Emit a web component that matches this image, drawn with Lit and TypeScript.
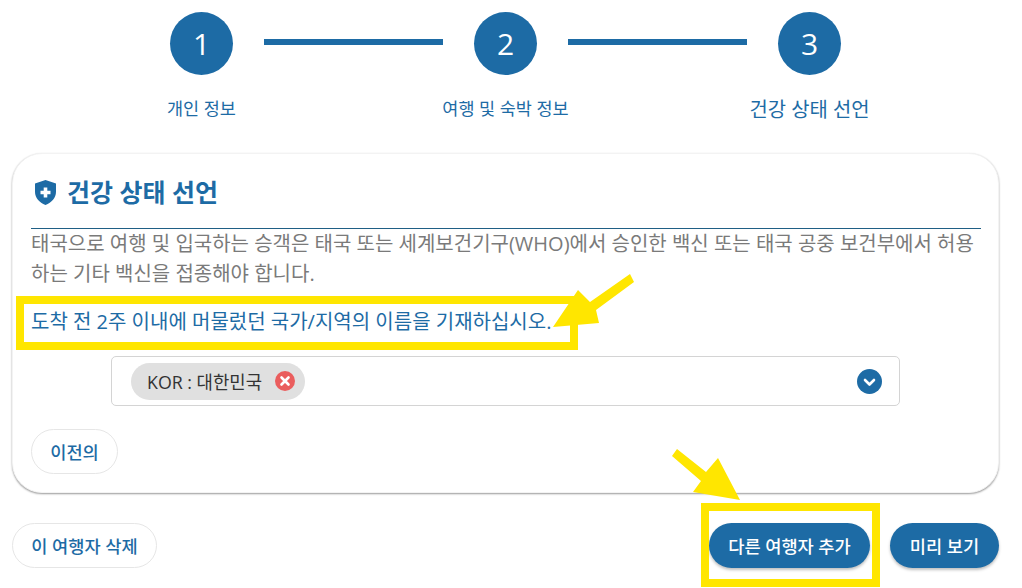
import { LitElement, html, css, svg } from "lit";
import { customElement } from "lit/decorators.js";

@customElement("app-root")
export class AppRoot extends LitElement {
  static styles = css`
    :host {
      display: block;
      position: relative;
      width: 1022px;
      height: 588px;
      overflow: hidden;
      background: #fff;
      font-family: "Open Sans", "Noto Sans CJK KR", sans-serif;
      color: #1d6ba5;
    }
    * { box-sizing: border-box; }
    .page {
      display: flex;
      flex-direction: column;
      padding: 12px 23px 0 12px;
    }
    .steps {
      display: flex;
      justify-content: center;
      align-items: center;
      gap: 31px;
    }
    .circle {
      width: 63px;
      height: 63px;
      border-radius: 50%;
      background: #1d6ba5;
      color: #fff;
      font-size: 30px;
      display: flex;
      align-items: center;
      justify-content: center;
    }
    .line {
      width: 179px;
      height: 6px;
      margin-top: -3px;
      background: #1d6ba5;
    }
    .labels {
      display: grid;
      grid-template-columns: repeat(3, 304px);
      justify-content: center;
      height: 78px;
      padding-top: 21px;
      text-align: center;
      font-size: 17.5px;
      line-height: 24px;
    }
    .labels .active { font-size: 19.9px; line-height: 28px; }
    .card {
      height: 340px;
      border-radius: 30px;
      border: 1px solid #f3f3f3;
      box-shadow: 0 1px 2px rgba(0,0,0,.4);
      padding: 19px 17px 0 18px;
      background: #fff;
    }
    .title {
      display: flex;
      align-items: center;
      gap: 11px;
      height: 56px;
      padding: 0 0 19px 4px;
      border-bottom: 1px solid #1f5f85;
      font-size: 25px;
      font-weight: 700;
      color: #1d6ba5;
    }
    .title svg { width: 21px; height: 25px; flex: none; margin-top: 2px; }
    .desc {
      margin: 0;
      font-size: 20px;
      line-height: 30px;
      color: #7a7a7a;
      word-break: break-all;
    }
    .ask {
      margin: 18px 0 0;
      font-size: 20px;
      line-height: 30px;
      color: #1d6ba5;
    }
    .select {
      margin: 19px 0 0 80px;
      width: 789px;
      height: 50px;
      border: 1px solid #d4d4d4;
      border-radius: 5px;
      padding: 6px 17px 0 19px;
      display: flex;
      justify-content: space-between;
      align-items: flex-start;
    }
    .chip {
      display: flex;
      align-items: center;
      gap: 13px;
      width: 174px;
      height: 37px;
      padding: 0 0 2px 16px;
      border-radius: 19px;
      background: #e0e0e0;
      color: #333;
      font-size: 17.8px;
      white-space: nowrap;
    }
    .chip svg { width: 20px; height: 20px; flex: none; }
    .chev { width: 25px; height: 25px; margin-top: 6px; flex: none; }
    .btn {
      display: flex;
      align-items: center;
      justify-content: center;
      height: 45px;
      border-radius: 23px;
      font-size: 17.6px;
      font-weight: 500;
      white-space: nowrap;
    }
    .ghost {
      background: #fff;
      color: #1d6ba5;
      border: 1px solid #e6e6e6;
    }
    .prev { width: 87px; margin-top: 23px; }
    .footer {
      display: flex;
      align-items: center;
      margin-top: 30px;
    }
    .del { width: 145px; }
    .solid {
      background: #1d6ba5;
      color: #fff;
      box-shadow: 0 2px 3px rgba(0,0,0,.25);
    }
    .add { width: 161px; margin-left: auto; }
    .preview { width: 109px; margin-left: 20px; }
    .marks {
      position: absolute;
      left: 0;
      top: 0;
      width: 1022px;
      height: 588px;
      pointer-events: none;
    }
  `;

  private marks() {
    return svg`
      <g fill="none" stroke="#ffe600" stroke-width="8">
        <rect x="20" y="300" width="554" height="46"/>
        <rect x="705" y="507" width="171" height="76"/>
      </g>
      <g fill="#ffe600">
        <polygon points="553,327 578,290 590,302 630,274 634,282 596,310 599,323"/>
        <polygon points="740,500 718,458 706,472 677,449 672,456 701,481 693,492"/>
      </g>
    `;
  }

  render() {
    return html`
      <div class="page">
        <div class="steps">
          <div class="circle">1</div>
          <div class="line"></div>
          <div class="circle">2</div>
          <div class="line"></div>
          <div class="circle">3</div>
        </div>
        <div class="labels">
          <div>개인 정보</div>
          <div>여행 및 숙박 정보</div>
          <div class="active">건강 상태 선언</div>
        </div>
        <section class="card">
          <div class="title">
            <svg viewBox="0 0 21 25">
              <path fill="#1d6ba5" fill-rule="evenodd" d="M10.5 0 21 3.6v8.2c0 6-4.3 10.9-10.5 13.2C4.3 22.700 0 17.800 0 11.800V3.600Z M8.700 7.500v3.200H5.500v3.600h3.200v3.200h3.600v-3.200h3.200v-3.600h-3.200V7.500Z"/>
            </svg>
            <span>건강 상태 선언</span>
          </div>
          <p class="desc">태국으로 여행 및 입국하는 승객은 태국 또는 세계보건기구(WHO)에서 승인한 백신 또는 태국 공중 보건부에서 허용하는 기타 백신을 접종해야 합니다.</p>
          <p class="ask">도착 전 2주 이내에 머물렀던 국가/지역의 이름을 기재하십시오.</p>
          <div class="select">
            <div class="chip">
              <span>KOR : 대한민국</span>
              <svg viewBox="0 0 20 20">
                <circle cx="10" cy="10" r="10" fill="#ea5d5d"/>
                <path d="M6.500 6.500l7 7M13.500 6.500l-7 7" stroke="#fff" stroke-width="2.600" stroke-linecap="round"/>
              </svg>
            </div>
            <svg class="chev" viewBox="0 0 25 25">
              <circle cx="12.500" cy="12.500" r="12.500" fill="#1d6ba5"/>
              <path d="M8 11l4.500 4.500L17 11" fill="none" stroke="#fff" stroke-width="2.600" stroke-linecap="round" stroke-linejoin="round"/>
            </svg>
          </div>
          <div class="btn ghost prev">이전의</div>
        </section>
        <div class="footer">
          <div class="btn ghost del">이 여행자 삭제</div>
          <div class="btn solid add">다른 여행자 추가</div>
          <div class="btn solid preview">미리 보기</div>
        </div>
      </div>
      <svg class="marks" viewBox="0 0 1022 588">${this.marks()}</svg>
    `;
  }
}
